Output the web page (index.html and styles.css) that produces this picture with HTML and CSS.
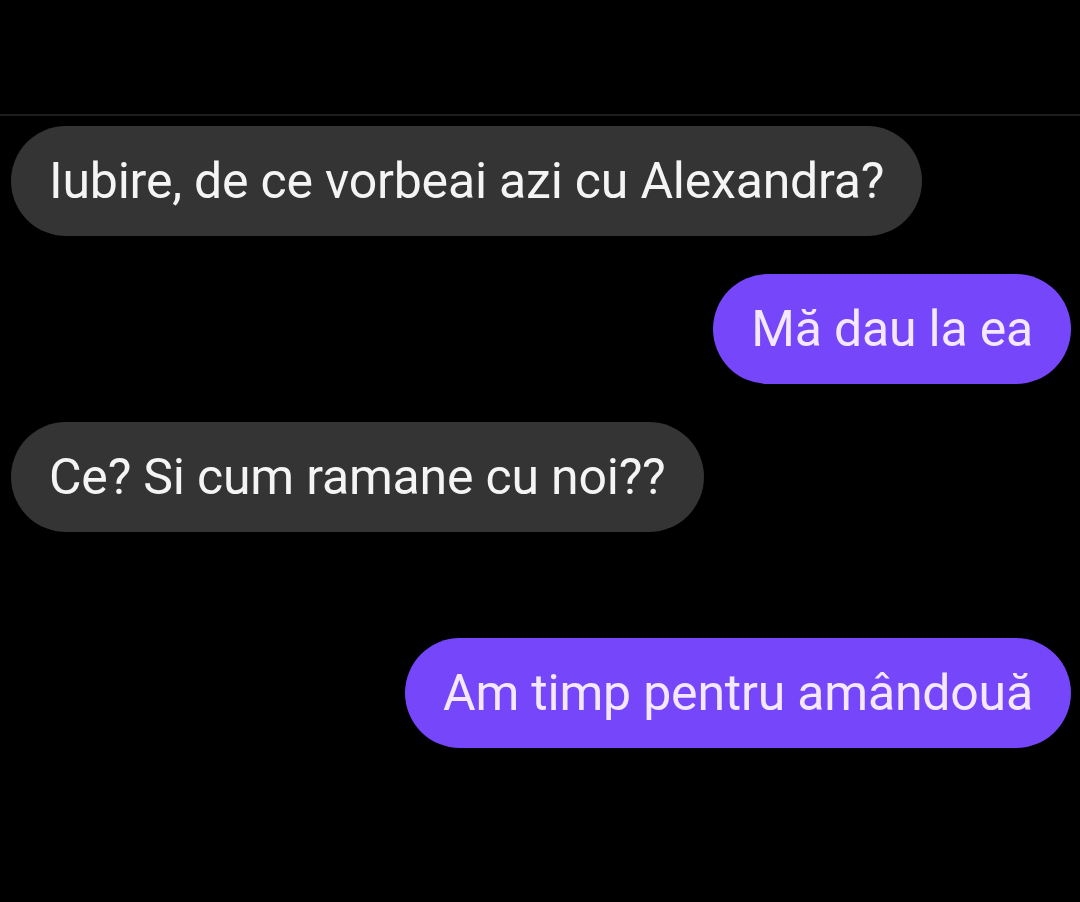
FILE: index.html
```html
<!DOCTYPE html>
<html lang="ro">
<head>
<meta charset="utf-8">
<title>Chat</title>
<link rel="stylesheet" href="styles.css">
</head>
<body>
  <div class="topbar"></div>
  <main class="chat">
    <div class="msg in">Iubire, de ce vorbeai azi cu Alexandra?</div>
    <div class="msg out">Mă dau la ea</div>
    <div class="msg in">Ce? Si cum ramane cu noi??</div>
    <div class="msg out later">Am timp pentru amândouă</div>
  </main>
</body>
</html>
```

FILE: styles.css
```css
html, body {
  margin: 0;
  padding: 0;
  background: #000;
  height: 100%;
}

body {
  font-family: Roboto, "Noto Sans", "Liberation Sans", sans-serif;
  overflow: hidden;
}

.topbar {
  height: 114px;
  border-bottom: 2px solid #1d1d1d;
}

.chat {
  display: flex;
  flex-direction: column;
  gap: 38px;
  padding: 10px 9px 0 11px;
}

.msg {
  height: 110px;
  line-height: 110px;
  padding: 0 38px;
  border-radius: 55px;
  font-size: 50px;
  letter-spacing: -0.2px;
  white-space: nowrap;
}

.msg.in {
  align-self: flex-start;
  background: #343434;
  color: #f4f4f4;
}

.msg.out {
  align-self: flex-end;
  background: #7646fb;
  color: #f3e8ff;
}

.msg.later {
  margin-top: 68px;
}
```
